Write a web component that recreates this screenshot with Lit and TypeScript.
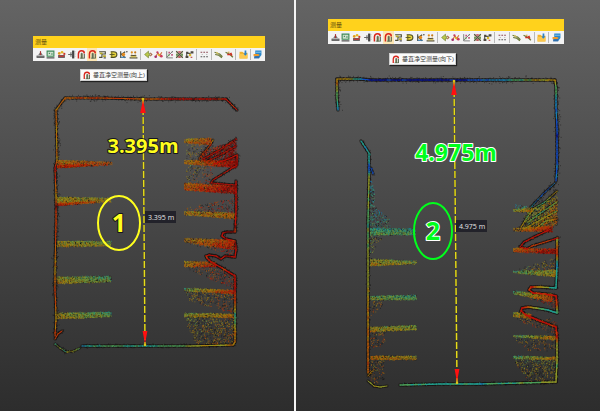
import { LitElement, html, svg, css, SVGTemplateResult } from "lit";
import { customElement, property } from "lit/decorators.js";
import { classMap } from "lit/directives/class-map.js";

/* ---------- toolbar icons, 16 x 16 ---------- */
const arch = svg`<path d="M2.5 15V7Q3 1.5 8 1.5T13 6" fill="none" stroke="#d8261c" stroke-width="2.6"/>
  <path d="M6 6h5v9H6z" fill="#a9ad90"/><path d="M8.5 5v10M13 7v8" stroke="#3c4a34" stroke-width="1.6"/><path d="M5 14.5h8" stroke="#5a6a4a" stroke-width="1.4"/>`;

const ICONS: Record<string, SVGTemplateResult> = {
  ground: svg`<path d="M1 10h14v4H1z" fill="#4a4a4a"/><path d="M4 9l4-6 4 6z" fill="#777"/><path d="M8 2v7" stroke="#a33" stroke-width="2"/><path d="M2 12h12" stroke="#a9a9a9"/>`,
  area: svg`<path d="M2 2h12v9H2z" fill="#cfe0cf" stroke="#3f8a58" stroke-width="2"/><path d="M5 5h2v2H5zM9 6h3v2H9z" fill="#3f8a58"/><path d="M1 13h14v2H1z" fill="#444"/>`,
  points: svg`<path d="M2 9h12v5H2z" fill="#555"/><path d="M3 11h10" stroke="#d33" stroke-width="2"/><circle cx="4" cy="6" r="2.4" fill="#e39b1c"/><circle cx="9" cy="4" r="2.4" fill="#e2b420"/><circle cx="13" cy="7" r="2" fill="#cc3a2a"/>`,
  side: svg`<path d="M9 1h4v14H9z" fill="#444"/><path d="M2 8h7M7 4v8" stroke="#666" stroke-width="2"/><path d="M14 2v12" stroke="#aaa" stroke-width="2" stroke-dasharray="2 2"/>`,
  clearUp: arch,
  clearDown: arch,
  steps: svg`<path d="M2 3h11v4H7v6H2" fill="none" stroke="#4c4c34" stroke-width="2"/><path d="M3 6h5M9 11h5" stroke="#b5a72a" stroke-width="3"/><path d="M10 14h4" stroke="#444" stroke-width="2"/>`,
  section: svg`<path d="M3 3h5q6 0 6 5t-6 5H3" fill="#e4d13a" stroke="#4c4a20" stroke-width="2"/><path d="M1 8h9M5 4v8" stroke="#57541f" stroke-width="1.6"/>`,
  angle: svg`<path d="M3 2v12M4 8l7-5M5 8l6 6" stroke="#4b4b3c" stroke-width="2"/><circle cx="8" cy="8" r="3" fill="#e58b1e"/><path d="M3 13h9" stroke="#3c78a8" stroke-width="2"/><circle cx="14" cy="3" r="1.4" fill="#444"/>`,
  height: svg`<path d="M1 14h14M3 10h10" stroke="#56513a" stroke-width="2"/><path d="M3 12h10" stroke="#d8c14a" stroke-width="2"/><circle cx="5" cy="4" r="2" fill="#e08c1d"/><circle cx="11" cy="4" r="2" fill="#c67a1a"/><path d="M5 6v4M11 6v4" stroke="#c99a3c"/>`,
  diamond: svg`<path d="M1 8l7-6v4h2v4H8v4z" fill="#b9c84a" stroke="#68762a"/><path d="M11 5l3 3-3 3" fill="none" stroke="#a86a4a" stroke-width="2"/>`,
  scatter: svg`<path d="M3 12l4-7 3 5 4-6" fill="none" stroke="#d0703a" stroke-width="2"/><circle cx="6" cy="4" r="2" fill="#c43c62"/><circle cx="13" cy="11" r="2.4" fill="#cc3a5c"/><circle cx="3" cy="12" r="2.4" fill="#a32d6c"/><circle cx="9" cy="9" r="2" fill="#e3b020"/>`,
  grid: svg`<path d="M3 2v12h11M3 13L13 3" fill="none" stroke="#777" stroke-width="1.6"/><path d="M6 3h3v3H6zM11 7h3v3h-3z" fill="#c0557c"/><path d="M5 8h3v3H5z" fill="#6b9a56"/><path d="M12 2h2v2h-2z" fill="#555"/>`,
  mesh: svg`<path d="M2 2h12v12H2z" fill="#c9c6a0"/><path d="M2 2l12 12M14 2L2 14" stroke="#514f42" stroke-width="1.8"/><path d="M6 2h4v3H6z" fill="#cc5c7a"/><path d="M2 7h3v3H2zM11 7h3v3h-3z" fill="#5e8f4c"/><path d="M6 11h4v3H6z" fill="#b84a5a"/>`,
  node: svg`<path d="M3 13V6h7" fill="none" stroke="#55554a" stroke-width="2"/><path d="M10 2h5v4h-5zM1 10h5v4H1zM2 3h4v3H2z" fill="#4c463e"/><path d="M7 7h4v4H7z" fill="#d9b82a"/><path d="M10 13h3" stroke="#b44" stroke-width="2"/>`,
  dots: svg`<path d="M1 4h14" stroke="#8c4a54" stroke-width="2" stroke-dasharray="3 2"/><path d="M1 12h14" stroke="#555" stroke-width="2" stroke-dasharray="3 2"/><path d="M3 8h2M11 8h2" stroke="#bbb" stroke-width="2"/>`,
  lineA: svg`<path d="M1 4l9 3 5 5M2 8l6 1 6 5" fill="none" stroke="#6d7a3c" stroke-width="2.2"/><path d="M4 4l4 3" stroke="#d5c25a" stroke-width="2"/>`,
  lineB: svg`<path d="M1 4l8 4 5 5" fill="none" stroke="#6d7a3c" stroke-width="2.4"/><path d="M4 8h5M10 5l2 5" stroke="#cf2f22" stroke-width="3"/><path d="M5 4h3" stroke="#d9a53a" stroke-width="2"/>`,
  folder: svg`<path d="M1 3h5l2 2h7v10H1z" fill="#f2b32c"/><path d="M1 7h14v8H1z" fill="#fbc84c"/><path d="M10 1h3v5h2l-4 4-3-4h2z" fill="#2a82c8"/>`,
  report: svg`<path d="M4 1h11v8l-4 5H4z" fill="#2b87c9"/><path d="M5 4h9" stroke="#8fd0f2" stroke-width="1.5"/><path d="M1 7h8l3 2-3 2H1z" fill="#f09a2a"/><path d="M2 11h9v4H2z" fill="#2f6fae"/>`,
};

const GROUPS: [string, string][][] = [
  [["ground", "地面"], ["area", "面积"], ["points", "点距"], ["side", "侧距"], ["clearUp", "垂直净空测量(向上)"],
   ["clearDown", "垂直净空测量(向下)"], ["steps", "高差"], ["section", "断面"], ["angle", "角度"], ["height", "高度"]],
  [["diamond", "坡度"], ["scatter", "散点"], ["grid", "格网"], ["mesh", "密度"], ["node", "节点"]],
  [["dots", "间距"]],
  [["lineA", "折线"], ["lineB", "线距"]],
  [["folder", "导入"]],
  [["report", "导出"]],
];

@customElement("measure-toolbar")
export class MeasureToolbar extends LitElement {
  static styles = css`
    :host { display: block; font: 6px/12px "Noto Sans", "Noto Sans CJK SC", sans-serif; background: #f3f3f3; }
    .title { background: #ffd21c; color: #5c4a0c; padding: 0 2px; height: 12px; }
    .row { display: flex; align-items: stretch; height: 13px; padding: 0 2px; }
    .tool { flex: 1 1 0; min-width: 0; border: 0; padding: 0; background: none; display: flex; align-items: center; justify-content: center; }
    .tool.on { background: #fde6b4; }
    .icon { width: 9px; height: 9px; display: block; flex: none; }
    .sep { flex: none; width: 1px; margin: 1px 2px 1px 1px; background: #b9b9b9; }
  `;
  render() {
    return html`<div class="title">测量</div>
      <div class="row" role="toolbar" aria-label="测量">
        ${GROUPS.map((group, g) => html`
          ${g ? html`<span class="sep"></span>` : ""}
          ${group.map(([id, label]) => html`<button class=${classMap({ tool: true, on: id === "clearDown" })} aria-label=${label}>
            <svg class="icon" viewBox="0 0 16 16">${ICONS[id]}</svg></button>`)}`)}
      </div>`;
  }
}

/* ---------- point cloud ---------- */
// Height ramp from navy (0) to deep red (10); the last entry is shadow.
const RAMP = ["#06108e", "#124cc4", "#1880b4", "#229c8c", "#4a9c58", "#8c9428", "#a8820e", "#b45a0a", "#bc3808", "#bc1008", "#7a0a08", "#141210"];
const SHADOW = 11;

type Stop = [x: number, y: number, tone: number];

class Cloud {
  private seed: number;
  private dots: string[][] = RAMP.map(() => []);
  private cores: SVGTemplateResult[] = [];
  private edges: SVGTemplateResult[] = [];
  constructor(seed: number) { this.seed = seed; }

  private rnd() {
    this.seed = (this.seed * 1664525 + 1013904223) % 4294967296;
    return this.seed / 4294967296;
  }
  private gauss() { return this.rnd() + this.rnd() + this.rnd() - 1.5; }
  private clamp(t: number) { return Math.max(0, Math.min(10, Math.round(t))); }
  private dot(x: number, y: number, tone: number) {
    this.dots[tone === SHADOW ? SHADOW : this.clamp(tone)].push(`M${x.toFixed(1)} ${y.toFixed(1)}h.8`);
  }

  // A scanned surface seen edge-on: bright core with dark scatter around it.
  line(stops: Stop[], spread = 2, width = 1.2) {
    for (let i = 1; i < stops.length; i++) {
      const [ax, ay, at] = stops[i - 1], [bx, by, bt] = stops[i];
      const len = Math.hypot(bx - ax, by - ay);
      const parts = Math.max(1, Math.ceil(len / 4));
      for (let p = 0; p < parts; p++) {
        const u = p / parts, v = (p + 1) / parts;
        const tone = this.clamp(at + (bt - at) * (u + v) / 2 + this.gauss() * 0.7);
        const d = `M${(ax + (bx - ax) * u).toFixed(1)} ${(ay + (by - ay) * u).toFixed(1)}L${(ax + (bx - ax) * v).toFixed(1)} ${(ay + (by - ay) * v).toFixed(1)}`;
        this.edges.push(svg`<path d=${d} stroke="#1a1612" stroke-width=${width + 2.2} stroke-linecap="round" opacity="0.65"/>`);
        this.cores.push(svg`<path d=${d} stroke=${RAMP[tone]} stroke-width=${width} stroke-linecap="round"/>`);
      }
      for (let n = 0; n < len * 3; n++) {
        const u = this.rnd(), dark = this.rnd() < 0.72;
        const s = dark ? spread : Math.min(spread, 2) / 2;
        this.dot(ax + (bx - ax) * u + this.gauss() * s, ay + (by - ay) * u + this.gauss() * s,
          dark ? SHADOW : at + (bt - at) * u + this.gauss() * 1.4);
      }
    }
    return this;
  }

  // Quadrilateral filled with points: left edge, right edge, tones at both ends.
  private scatter(x0: number, t0: number, b0: number, x1: number, t1: number, b1: number, c0: number, c1: number, density: number, dark: number) {
    const h0 = b0 - t0, h1 = b1 - t1;
    const count = (x1 - x0) * (h0 + h1) / 2 * density;
    for (let n = 0; n < count; n++) {
      let u = this.rnd();
      if (this.rnd() > (h0 + (h1 - h0) * u) / Math.max(h0, h1)) u = 1 - u;
      const v = this.rnd();
      const top = t0 + (t1 - t0) * u, bottom = b0 + (b1 - b0) * u;
      this.dot(x0 + (x1 - x0) * u, top + (bottom - top) * v + this.gauss() * 0.5,
        this.rnd() < dark ? SHADOW : c0 + (c1 - c0) * u + v * 1.2 + this.gauss() * 1.5);
    }
    return this;
  }
  fill(x0: number, t0: number, b0: number, x1: number, t1: number, b1: number, c0: number, c1: number, density = 2.4) {
    this.edges.push(svg`<path d=${`M${x0} ${t0}L${x1} ${t1}V${b1}L${x0} ${b0}z`} fill=${RAMP[this.clamp((c0 + c1) / 2 + 0.6)]} opacity="0.4"/>`);
    return this.scatter(x0, t0, b0, x1, t1, b1, c0, c1, density, 0.3);
  }
  haze(x0: number, t0: number, b0: number, x1: number, t1: number, b1: number, c0: number, c1: number, density = 0.3) {
    return this.scatter(x0, t0, b0, x1, t1, b1, c0, c1, density, 0.4);
  }

  draw() {
    return svg`<g fill="none" stroke-width="0.8">
      ${this.edges}
      <path d=${this.dots[SHADOW].join("")} stroke=${RAMP[SHADOW]} opacity="0.75"/>
      ${this.dots.slice(0, SHADOW).map((d, i) => svg`<path d=${d.join("")} stroke=${RAMP[i]} opacity="0.85"/>`)}
      ${this.cores}
    </g>`;
  }
}

const upward = new Cloud(7)
  .line([[55, 336, 8], [56, 318, 6], [55, 290, 8], [55, 270, 6], [56, 220, 8], [56, 205, 9], [56, 196, 6], [55, 168, 9], [57, 160, 6], [56, 110, 7], [65, 98, 7], [100, 98, 8], [143, 99, 7], [180, 99, 9], [226, 99, 9], [237, 110, 9]], 3, 1)
  .fill(57, 160, 168, 112, 162, 165, 6, 7).fill(57, 165, 168, 90, 164, 166, 8, 8)
  .fill(57, 197, 205, 111, 198, 202, 5, 5).fill(57, 203, 206, 95, 201, 203, 8, 7)
  .fill(57, 241, 247, 111, 241, 246, 5, 4)
  .fill(57, 277, 284, 111, 276, 282, 5, 3)
  .fill(57, 313, 319, 111, 312, 317, 5, 3)
  .line([[55, 339, 8], [58, 334, 8], [62, 331, 9]], 2, 1)
  .line([[55, 344, 4], [60, 348, 4], [66, 352, 4]], 2, 0.6)
  .line([[66, 352, 5], [74, 351, 5], [80, 348, 4]], 2, 0.4)
  .line([[82, 346, 3], [120, 346, 4], [150, 346, 3], [190, 346, 5], [233, 345, 6], [235, 342, 7], [235, 328, 6], [235, 316, 3], [235, 306, 7], [235, 292, 9], [235, 276, 9], [222, 268, 9], [211, 262, 9], [207, 258, 9], [206, 256, 8], [209, 255, 9], [216, 256, 9], [221, 259, 9], [225, 256, 10], [235, 257, 9], [236, 250, 9], [235, 241, 9], [226, 239, 9], [222, 236, 9], [223, 233, 9], [227, 232, 10], [235, 232, 9], [236, 210, 9], [236, 181, 9]], 2, 1.2)
  .fill(184, 139, 143, 211, 138, 145, 5, 7)
  .haze(186, 144, 162, 204, 144, 158, 5, 6, 0.3)
  .haze(200, 152, 161, 236, 140, 163, 8, 9, 1.4)
  .line([[199, 159, 8], [210, 145, 8], [213, 140, 6]], 3, 0.5)
  .line([[203, 159, 9], [220, 150, 9], [236, 139, 9]], 3, 0.6)
  .line([[206, 162, 9], [224, 153, 9], [236, 146, 9]], 3, 0.6)
  .line([[214, 164, 9], [228, 159, 9], [237, 155, 9], [237, 164, 10]], 3, 1)
  .fill(184, 160, 164, 237, 161, 168, 5, 9, 3)
  .haze(186, 165, 186, 212, 167, 183, 5, 8, 0.3)
  .line([[237, 165, 9], [224, 173, 9], [213, 180, 9], [211, 183, 9], [222, 184, 9], [236, 185, 9]], 2, 0.8)
  .fill(184, 183, 190, 236, 186, 194, 6, 9, 3)
  .haze(186, 208, 214, 234, 198, 214, 7, 9, 0.35)
  .fill(184, 211, 215, 234, 213, 219, 5, 6)
  .fill(184, 238, 242, 234, 240, 250, 5, 8)
  .haze(190, 242, 244, 234, 242, 256, 6, 8, 0.5)
  .fill(184, 261, 267, 216, 262, 267, 5, 8)
  .haze(188, 267, 269, 234, 270, 290, 6, 8, 0.4)
  .fill(184, 288, 291, 234, 290, 294, 3, 8)
  .haze(186, 292, 300, 234, 293, 314, 5, 7, 0.4)
  .fill(184, 313, 317, 234, 314, 318, 4, 6)
  .haze(186, 318, 326, 196, 318, 344, 5, 5, 0.5)
  .haze(196, 318, 344, 234, 318, 344, 5, 6, 0.5);

const downward = new Cloud(23)
  .line([[338, 110, 2], [337, 98, 4], [337, 88, 5], [337, 79, 7], [350, 79, 5], [360, 79, 2], [372, 80, 0], [410, 80, 0], [450, 80, 0], [475, 80, 1], [500, 80, 2], [528, 80, 5], [555, 80, 6], [556, 88, 4], [556, 105, 2], [557, 130, 1], [557, 165, 1], [556, 181, 2]], 3, 1.2)
  .line([[555, 183, 2], [543, 194, 1], [530, 208, 3]], 3, 0.5)
  .line([[361, 141, 2], [369, 153, 3], [369, 171, 1], [369, 176, 5], [368, 220, 4], [368, 260, 5], [368, 300, 6], [368, 340, 7], [368, 373, 7]], 2, 1.2)
  .line([[371, 168, 1], [373, 174, 1]], 2, 0.8)
  .haze(370, 178, 228, 374, 190, 228, 2, 3, 0.8)
  .haze(374, 206, 228, 390, 220, 228, 2, 3, 0.5)
  .fill(370, 228, 235, 415, 229, 235, 3, 3)
  .haze(370, 235, 256, 382, 235, 238, 4, 5, 0.4)
  .fill(370, 259, 266, 416, 261, 264, 5, 4)
  .fill(370, 296, 300, 416, 295, 300, 4, 3)
  .haze(370, 301, 316, 382, 301, 308, 6, 6, 0.35)
  .fill(370, 327, 332, 416, 325, 330, 5, 4)
  .haze(370, 332, 350, 385, 332, 345, 7, 6, 0.35)
  .fill(370, 356, 360, 416, 356, 360, 6, 5)
  .haze(370, 361, 385, 384, 361, 380, 6, 6, 0.35)
  .line([[368, 376, 7], [372, 371, 6]], 2, 0.7)
  .line([[368, 381, 5], [374, 386, 5], [380, 387, 5], [387, 386, 5]], 1, 1)
  .line([[400, 385, 4], [440, 384, 3], [480, 384, 3], [520, 383, 4], [556, 382, 5], [557, 360, 5], [557, 342, 5], [557, 338, 9], [556, 327, 9], [540, 321, 9], [526, 315, 9], [521, 311, 9], [522, 308, 9], [528, 307, 8], [536, 308, 5], [548, 310, 3], [557, 313, 3], [557, 306, 8], [556, 296, 9], [545, 294, 9], [533, 293, 9], [529, 290, 9], [531, 287, 9], [540, 287, 6], [556, 288, 3], [557, 264, 3], [557, 252, 9], [557, 238, 4]], 2, 1.4)
  .fill(513, 209, 212, 532, 208, 212, 4, 6)
  .haze(515, 204, 210, 528, 206, 210, 2, 3, 0.5)
  .haze(524, 214, 228, 557, 196, 226, 4, 6, 1.5)
  .line([[521, 227, 6], [528, 216, 5], [534, 209, 6]], 3, 0.7)
  .line([[531, 210, 5], [545, 202, 4], [557, 191, 6]], 3, 0.6)
  .line([[528, 222, 5], [542, 212, 3], [557, 202, 5]], 3, 0.7)
  .line([[524, 229, 6], [542, 219, 5], [557, 211, 4]], 3, 0.7)
  .line([[536, 228, 6], [546, 221, 4], [557, 219, 8]], 3, 0.7)
  .fill(513, 228, 231, 552, 226, 232, 5, 8, 3)
  .line([[551, 229, 9], [536, 236, 9], [524, 242, 9], [520, 247, 9], [527, 249, 9], [532, 246, 8], [558, 238, 9]], 2, 1)
  .fill(513, 248, 252, 557, 249, 254, 6, 9, 3)
  .haze(515, 270, 272, 555, 258, 272, 4, 6, 0.4)
  .fill(513, 271, 273, 556, 270, 277, 3, 5)
  .fill(513, 291, 294, 552, 294, 302, 3, 7)
  .haze(530, 296, 299, 556, 296, 308, 7, 8, 0.5)
  .fill(513, 312, 317, 531, 314, 319, 4, 7)
  .haze(517, 318, 320, 556, 319, 336, 6, 7, 0.35)
  .fill(513, 335, 337, 556, 336, 340, 3, 6)
  .haze(515, 338, 341, 530, 340, 352, 5, 6, 0.3)
  .haze(530, 340, 350, 556, 340, 352, 6, 6, 0.25)
  .fill(513, 356, 359, 556, 357, 360, 3, 6)
  .haze(515, 360, 363, 527, 360, 381, 5, 5, 0.5)
  .haze(527, 360, 381, 556, 360, 382, 5, 5, 0.45);

interface Scan {
  kind: "up" | "down";
  tip: string;
  view: string;
  cloud: Cloud;
  top: [number, number];
  bottom: [number, number];
  tag: { x: number; y: number; text: string };
  value: { x: number; y: number; text: string };
  badge: { x: number; y: number; rx: number; ry: number; text: string };
}

const SCANS: Scan[] = [
  {
    kind: "up", tip: "垂直净空测量(向上)", view: "0 81 294 330", cloud: upward, top: [143, 99], bottom: [145, 345],
    tag: { x: 145, y: 211, text: "3.395 m" }, value: { x: 143, y: 153, text: "3.395m" },
    badge: { x: 119, y: 223, rx: 21, ry: 27, text: "1" },
  },
  {
    kind: "down", tip: "垂直净空测量(向下)", view: "296 65 304 346", cloud: downward, top: [454, 81], bottom: [457, 383],
    tag: { x: 456, y: 220, text: "4.975 m" }, value: { x: 456, y: 161, text: "4.975m" },
    badge: { x: 433, y: 231, rx: 19, ry: 28, text: "2" },
  },
];

@customElement("scan-panel")
export class ScanPanel extends LitElement {
  @property({ attribute: false }) scan!: Scan;

  static styles = css`
    :host { display: block; min-height: 100vh; box-sizing: border-box; background: linear-gradient(#646464, #2d2d2d); }
    .up { padding-top: 36px; }
    .down { padding-top: 19px; }
    .up .bar { margin: 0 29px 8px 33px; }
    .down .bar { margin: 0 36px 9px 32px; }
    .up .tip { margin-left: 80px; }
    .down .tip { margin-left: 93px; }
    .tip { display: flex; align-items: center; gap: 2px; width: max-content; height: 12px; box-sizing: border-box; padding: 0 1px 0 2px;
      background: #fbfbfb; border: 1px solid #d0d0d0; box-shadow: 1px 1px 1px #222; color: #3c3c3c;
      font: 6px/10px "Liberation Sans", "Noto Sans CJK SC", sans-serif; }
    .tip-icon { width: 8px; height: 9px; }
    .scene { display: block; width: 100%; height: auto; }
    .tag { font: 7px "Open Sans", sans-serif; fill: #e6e6e6; }
    .mark { font-family: "Open Sans", sans-serif; font-weight: 700; text-anchor: middle; paint-order: stroke; stroke-linejoin: round; }
    .up .mark { fill: #ffff1e; stroke: #16161c; stroke-width: 2px; }
    .down .mark { fill: #00ff1c; stroke: #fff; stroke-width: 2px; }
    .up .value { font-size: 20px; }
    .down .value { font-size: 23px; }
    .badge { font-size: 25px; }
    .ring { fill: none; stroke-width: 2px; }
    .up .ring { stroke: #ffff1e; }
    .down .ring { stroke: #00ff1c; }
  `;

  render() {
    const { kind, tip, view, cloud, top, bottom, tag, value, badge } = this.scan;
    const [tx, ty] = top, [bx, by] = bottom;
    return html`<section class=${kind}>
      <measure-toolbar class="bar"></measure-toolbar>
      <div class="tip" role="tooltip"><svg class="tip-icon" viewBox="0 0 16 16">${arch}</svg>${tip}</div>
      <svg class="scene" viewBox=${view}>
        ${cloud.draw()}
        <line x1=${tx} y1=${ty} x2=${bx} y2=${by} stroke="#4a4618" stroke-width="2" stroke-dasharray="7 2"/>
        <line x1=${tx} y1=${ty} x2=${bx} y2=${by} stroke="#e6dc1c" stroke-width="1.4" stroke-dasharray="7 2"/>
        <path d="M${tx} ${ty + 1}l2.8 13h-5.6zM${bx} ${by - 1}l2.4 -13h-4.8z" fill="#ff1010"/>
        <circle cx=${tx} cy=${ty} r="1.3" fill="#d8c41c"/><circle cx=${bx} cy=${by} r="1.3" fill="#d8c41c"/>
        <rect x=${tag.x} y=${tag.y} width="31" height="12" fill="#22222a"/>
        <text class="tag" x=${tag.x + 3} y=${tag.y + 9}>${tag.text}</text>
        <text class="mark value" x=${value.x} y=${value.y}>${value.text}</text>
        <ellipse class="ring" cx=${badge.x} cy=${badge.y} rx=${badge.rx} ry=${badge.ry}/>
        <text class="mark badge" x=${badge.x} y=${badge.y + 9}>${badge.text}</text>
      </svg>
    </section>`;
  }
}

@customElement("app-root")
export class AppRoot extends LitElement {
  static styles = css`
    :host { display: grid; grid-template-columns: 294fr 304fr; gap: 2px; min-height: 100vh; background: #f4f4f4; }
  `;
  render() {
    return html`${SCANS.map((scan) => html`<scan-panel .scan=${scan}></scan-panel>`)}`;
  }
}
